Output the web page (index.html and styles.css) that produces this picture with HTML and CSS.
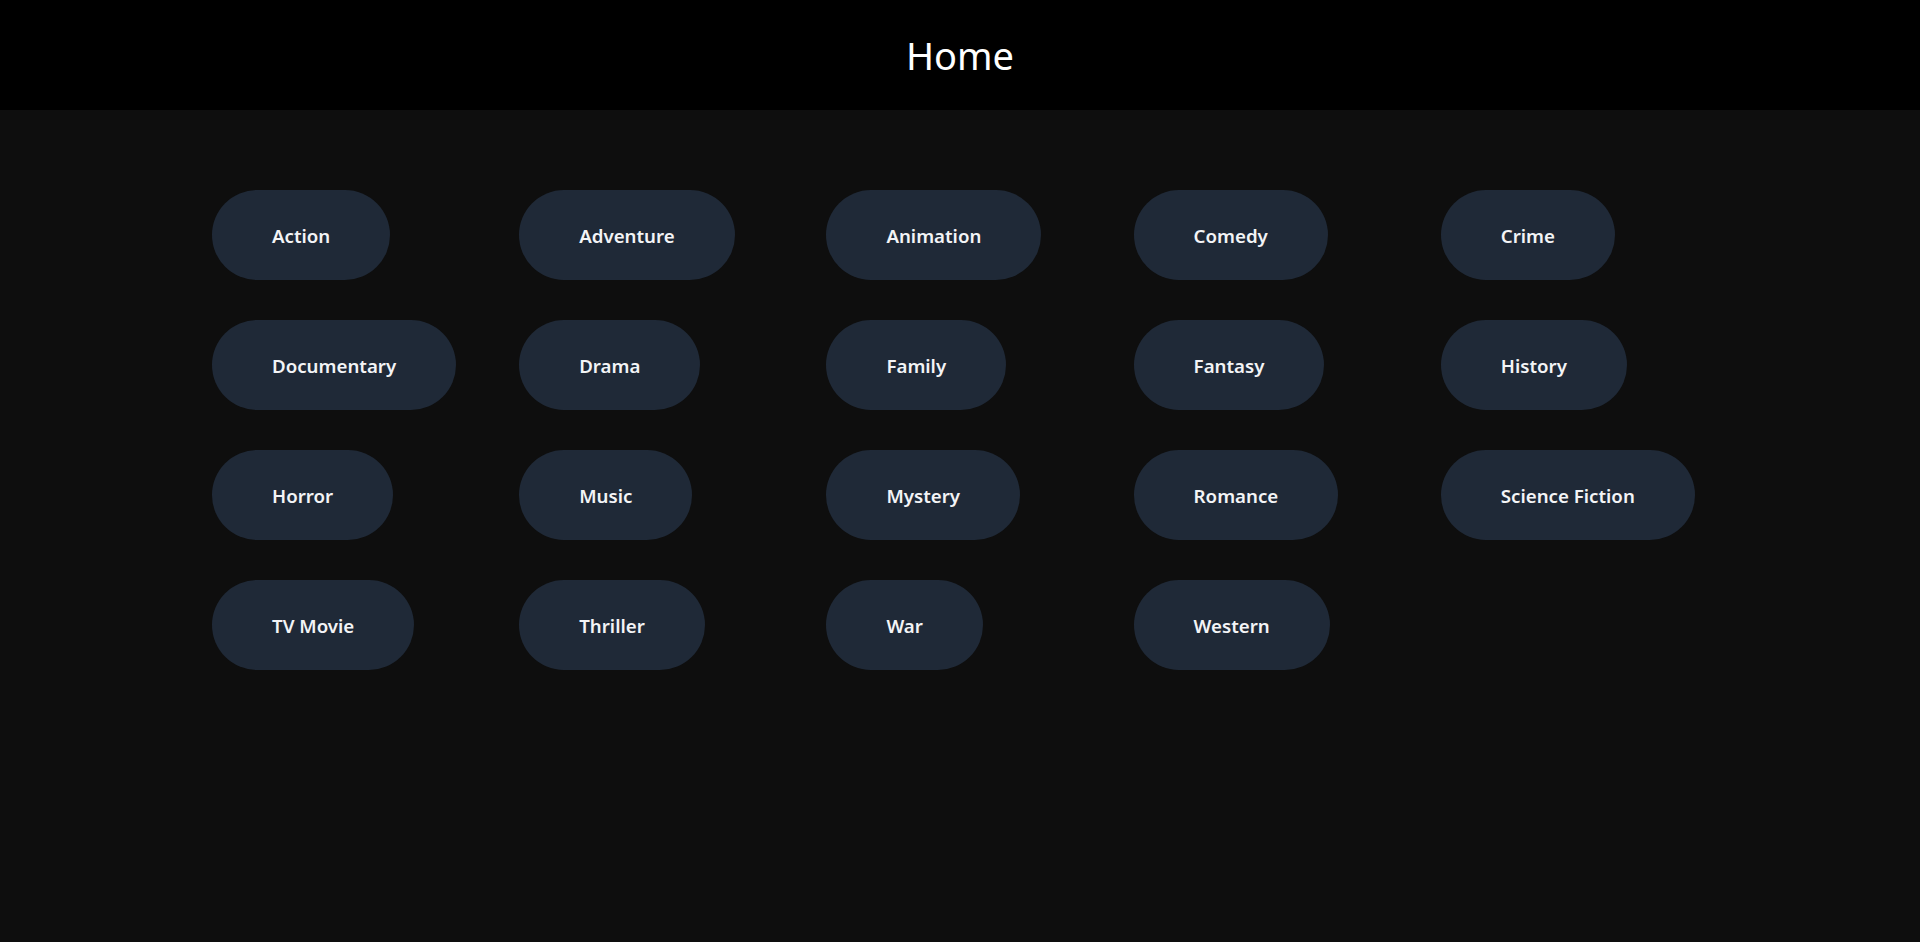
FILE: index.html
```html
<!DOCTYPE html>
<html lang="en">
<head>
<meta charset="utf-8">
<title>Home</title>
<link rel="stylesheet" href="styles.css">
</head>
<body>
<header class="topbar"><h1 class="title">Home</h1></header>
<main class="genres">
  <a class="pill" href="#">Action</a>
  <a class="pill" href="#">Adventure</a>
  <a class="pill" href="#">Animation</a>
  <a class="pill" href="#">Comedy</a>
  <a class="pill" href="#">Crime</a>
  <a class="pill" href="#">Documentary</a>
  <a class="pill" href="#">Drama</a>
  <a class="pill" href="#">Family</a>
  <a class="pill" href="#">Fantasy</a>
  <a class="pill" href="#">History</a>
  <a class="pill" href="#">Horror</a>
  <a class="pill" href="#">Music</a>
  <a class="pill" href="#">Mystery</a>
  <a class="pill" href="#">Romance</a>
  <a class="pill" href="#">Science Fiction</a>
  <a class="pill" href="#">TV Movie</a>
  <a class="pill" href="#">Thriller</a>
  <a class="pill" href="#">War</a>
  <a class="pill" href="#">Western</a>
</main>
</body>
</html>
```
FILE: styles.css
```css
* { box-sizing: border-box; }
html, body { margin: 0; padding: 0; }
body {
  background: #0e0e0e;
  min-height: 942px;
  font-family: "Noto Sans", "Open Sans", sans-serif;
  color: #fff;
}
.topbar {
  height: 110px;
  background: #000;
  display: flex;
  align-items: center;
  justify-content: center;
}
.title {
  margin: 0;
  font-size: 38px;
  font-weight: 400;
  color: #fff;
  line-height: 1;
}
.genres {
  display: grid;
  grid-template-columns: repeat(5, 1fr);
  gap: 40px;
  padding: 80px 212px;
  justify-items: start;
}
.pill {
  display: flex;
  align-items: center;
  height: 90px;
  padding: 0 60px;
  border-radius: 45px;
  background: #1f2937;
  color: #f3f4f6;
  text-decoration: none;
  font-size: 18.7px;
  font-weight: 600;
  white-space: nowrap;
}
```
